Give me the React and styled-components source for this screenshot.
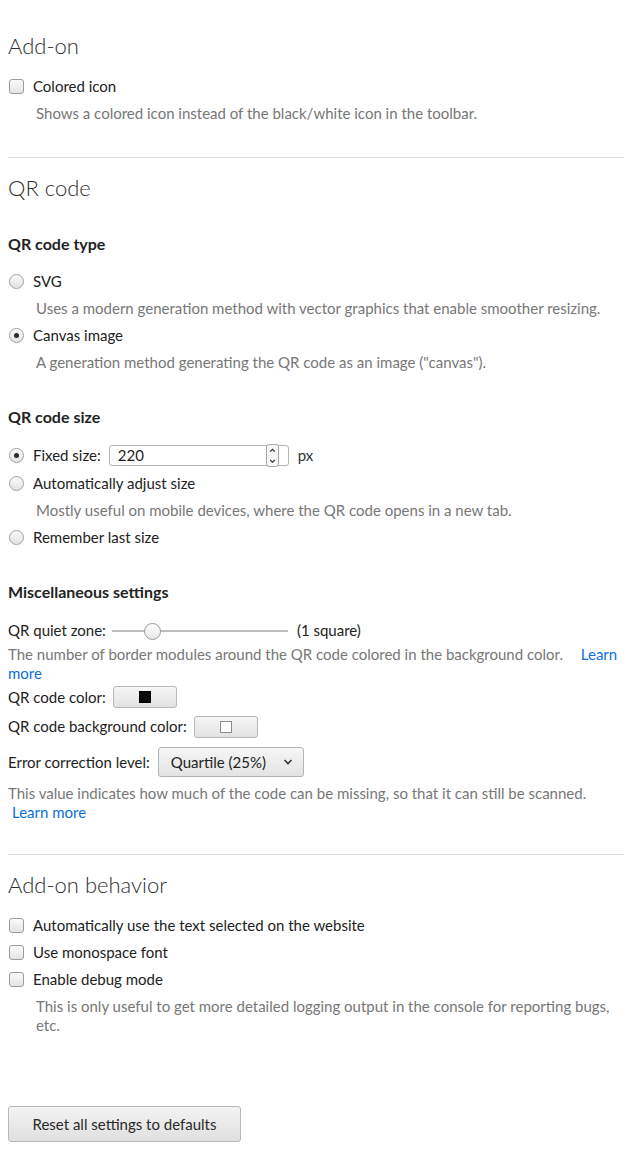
import React from 'react'
import styled, { createGlobalStyle } from 'styled-components'

const GlobalStyle = createGlobalStyle`
  html, body {
    margin: 0;
    padding: 0;
    background: #fff;
  }
  body {
    font-family: Lato, "Open Sans", sans-serif;
    font-size: 15px;
    color: #1f1f1f;
  }
`

const Page = styled.div`
  display: flex;
  flex-direction: column;
  padding: 31px 8px 32px 8px;
  width: 632px;
  box-sizing: border-box;
`

const Section = styled.section`
  display: flex;
  flex-direction: column;
  padding-bottom: ${(p) => p.$bottom ?? 30}px;
`

const Divider = styled.hr`
  margin: 0 0 15px 0;
  border: none;
  border-top: 1px solid #dcdcdf;
`

const SectionTitle = styled.h2`
  margin: 0 0 ${(p) => p.$gap ?? 12}px 0;
  font-size: 22px;
  line-height: 30px;
  font-weight: 300;
  color: #2f2f2f;
`

const GroupTitle = styled.h3`
  margin: 29px 0 12px 0;
  font-size: 16px;
  line-height: 24px;
  font-weight: 700;
  color: #232323;
`

const Row = styled.label`
  display: flex;
  align-items: center;
  min-height: ${(p) => p.$height || 27}px;
  line-height: 19px;
  gap: 9px;
  color: #222;
`

const Hint = styled.div`
  padding: ${(p) => p.$pad || '4px 0'};
  padding-left: ${(p) => (p.$flush ? 0 : 28)}px;
  line-height: 19px;
  color: #777;
`

const Link = styled.a`
  color: #0a70e0;
  text-decoration: none;
  margin-left: ${(p) => p.$offset || 0}px;
  display: ${(p) => (p.$block ? 'inline-block' : 'inline')};
`

const CheckBox = styled.span`
  width: 13px;
  height: 13px;
  margin-left: 1px;
  flex: none;
  border: 1px solid #9c9c9c;
  border-radius: 3px;
  background: linear-gradient(#fbfbfb, #e4e4e4);
`

const RadioBox = styled.span`
  width: 13px;
  height: 13px;
  margin-left: 1px;
  flex: none;
  border: 1px solid #a0a0a0;
  border-radius: 50%;
  background: linear-gradient(#fbfbfb, #e2e2e2);
  display: flex;
  align-items: center;
  justify-content: center;

  &::after {
    content: '';
    width: 5px;
    height: 5px;
    border-radius: 50%;
    background: ${(p) => (p.$on ? '#2b2b2b' : 'transparent')};
  }
`

const NumberField = styled.span`
  display: flex;
  align-items: center;
  width: 180px;
  height: 21px;
  box-sizing: border-box;
  border: 1px solid #b4b4b4;
  border-radius: 3px;
  padding: 0 2px 0 8px;
  margin-left: -1px;
`

const NumberValue = styled.span`
  flex: 1;
  color: #1f1f1f;
`

const Spinner = styled.span`
  display: flex;
  flex-direction: column;
  width: 13px;
  height: 23px;
  margin-right: 7px;
  border: 1px solid #a8a8a8;
  border-radius: 3px;
  background: #f7f7f7;
  box-sizing: border-box;

  svg {
    display: block;
    flex: 1;
  }
`

const Unit = styled.span`
  color: #333;
`

const Slider = styled.span`
  position: relative;
  width: 176px;
  height: 18px;
  margin-left: -3px;
  display: flex;
  align-items: center;

  &::before {
    content: '';
    height: 2px;
    width: 100%;
    background: #bdbdbd;
  }
`

const Thumb = styled.span`
  position: absolute;
  left: 32px;
  top: 1px;
  width: 15px;
  height: 15px;
  border-radius: 50%;
  border: 1px solid #9a9a9a;
  background: linear-gradient(#fdfdfd, #e8e8e8);
`

const SwatchButton = styled.span`
  display: flex;
  align-items: center;
  justify-content: center;
  width: 64px;
  height: 22px;
  box-sizing: border-box;
  border: 1px solid #b7b7b7;
  border-radius: 3px;
  background: linear-gradient(#f6f6f6, #e2e2e2);
  margin-left: -2px;

  &::after {
    content: '';
    width: 10px;
    height: 10px;
    border: 1px solid ${(p) => (p.$color === '#ffffff' ? '#8c8c8c' : '#000')};
    background: ${(p) => p.$color};
  }
`

const Select = styled.span`
  display: flex;
  align-items: center;
  justify-content: space-between;
  width: 146px;
  height: 30px;
  box-sizing: border-box;
  padding: 0 9px 0 12px;
  border: 1px solid #b4b4b4;
  border-radius: 3px;
  background: linear-gradient(#f6f6f6, #e3e3e3);
  color: #222;
  margin-left: -1px;
`

const Footer = styled.div`
  display: flex;
  padding-top: 67px;
`

const ResetButton = styled.button`
  width: 233px;
  height: 36px;
  border: 1px solid #b8b8b8;
  border-radius: 3px;
  background: linear-gradient(#f3f3f3, #e0e0e0);
  font-family: inherit;
  font-size: 15px;
  color: #2a2a2a;
  padding: 0;
`

const Checkbox = ({ children }) => (
  <Row>
    <CheckBox />
    {children}
  </Row>
)

const Radio = ({ on, children, height }) => (
  <Row $height={height}>
    <RadioBox $on={on} />
    {children}
  </Row>
)

export default function App() {
  return (
    <>
      <GlobalStyle />
      <Page>
        <Section>
          <SectionTitle>Add-on</SectionTitle>
          <Checkbox>Colored icon</Checkbox>
          <Hint>Shows a colored icon instead of the black/white icon in the toolbar.</Hint>
        </Section>
        <Divider />

        <Section $bottom={32}>
          <SectionTitle $gap={0}>QR code</SectionTitle>

          <GroupTitle>QR code type</GroupTitle>
          <Radio>SVG</Radio>
          <Hint>Uses a modern generation method with vector graphics that enable smoother resizing.</Hint>
          <Radio on>Canvas image</Radio>
          <Hint>A generation method generating the QR code as an image ("canvas").</Hint>

          <GroupTitle>QR code size</GroupTitle>
          <Radio on height={29}>
            Fixed size:
            <NumberField>
              <NumberValue>220</NumberValue>
              <Spinner>
                <svg viewBox="0 0 11 11" width="11" height="11">
                  <path d="M3 7 L5.5 4.5 L8 7" fill="none" stroke="#333" strokeWidth="1.3" />
                </svg>
                <svg viewBox="0 0 11 11" width="11" height="11">
                  <path d="M3 4 L5.5 6.5 L8 4" fill="none" stroke="#333" strokeWidth="1.3" />
                </svg>
              </Spinner>
            </NumberField>
            <Unit>px</Unit>
          </Radio>
          <Radio>Automatically adjust size</Radio>
          <Hint>Mostly useful on mobile devices, where the QR code opens in a new tab.</Hint>
          <Radio>Remember last size</Radio>

          <GroupTitle>Miscellaneous settings</GroupTitle>
          <Row $height={29}>
            QR quiet zone:
            <Slider>
              <Thumb />
            </Slider>
            (1 square)
          </Row>
          <Hint $flush $pad="0">
            The number of border modules around the QR code colored in the background color.{' '}
            <Link href="#" $offset={14}>Learn more</Link>
          </Hint>
          <Row $height={28}>
            QR code color:
            <SwatchButton $color="#0b0b0b" />
          </Row>
          <Row $height={31}>
            QR code background color:
            <SwatchButton $color="#ffffff" />
          </Row>
          <Row $height={40}>
            Error correction level:
            <Select>
              Quartile (25%)
              <svg viewBox="0 0 12 12" width="12" height="12">
                <path d="M2.5 4 L6 7.5 L9.5 4" fill="none" stroke="#333" strokeWidth="1.6" />
              </svg>
            </Select>
          </Row>
          <Hint $flush $pad="2px 0 0 0">
            This value indicates how much of the code can be missing, so that it can still be scanned.
            <Link href="#" $block $offset={4}>Learn more</Link>
          </Hint>
        </Section>
        <Divider />

        <Section $bottom={0}>
          <SectionTitle>Add-on behavior</SectionTitle>
          <Checkbox>Automatically use the text selected on the website</Checkbox>
          <Checkbox>Use monospace font</Checkbox>
          <Checkbox>Enable debug mode</Checkbox>
          <Hint>This is only useful to get more detailed logging output in the console for reporting bugs, etc.</Hint>
        </Section>

        <Footer>
          <ResetButton>Reset all settings to defaults</ResetButton>
        </Footer>
      </Page>
    </>
  )
}
